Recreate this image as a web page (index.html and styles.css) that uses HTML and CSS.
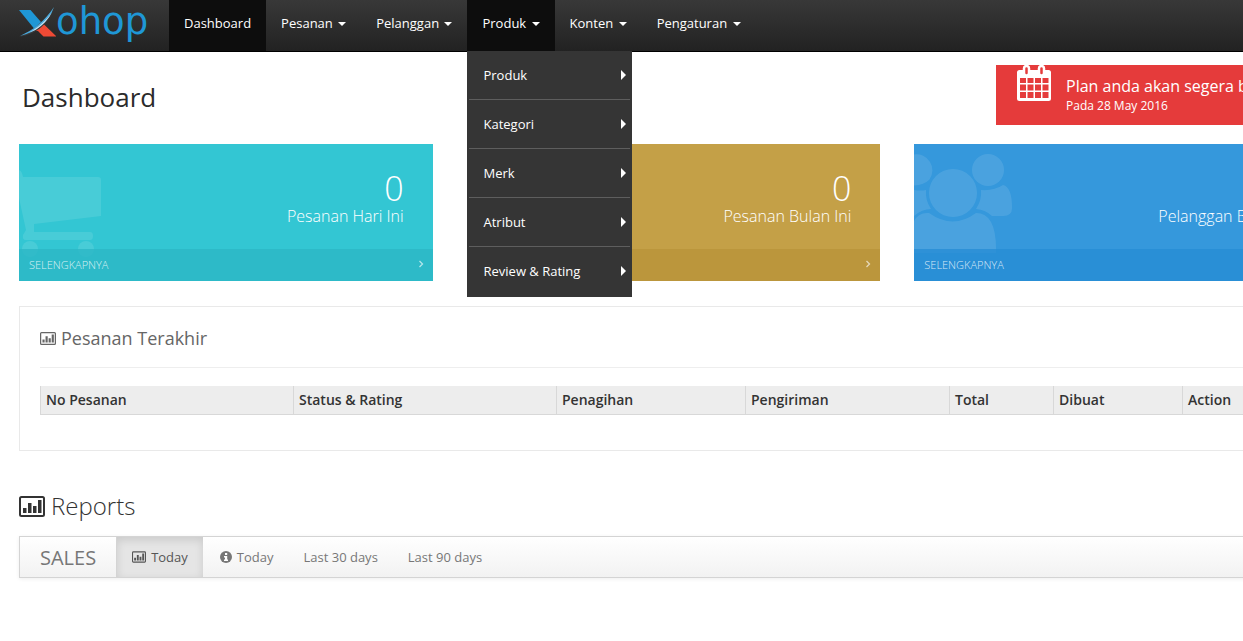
FILE: index.html
```html
<!DOCTYPE html>
<html lang="id">
<head>
<meta charset="utf-8">
<title>Xohop - Dashboard</title>
<link rel="stylesheet" href="styles.css">
</head>
<body>
<svg class="sprite" aria-hidden="true">
  <symbol id="chart" viewBox="0 0 26 21">
    <rect x="1" y="1" width="24" height="19" rx="1.5" fill="none" stroke="currentColor" stroke-width="2"/>
    <path fill="currentColor" d="M4 12h3.500v5H4zM9 7h3.500v10H9zM14 10h3.500v7H14zM19 4h3.500v13H19z"/>
  </symbol>
</svg>
<header class="navbar">
  <a class="brand" href="#" aria-label="Xohop">
    <svg class="brand-mark" viewBox="0 0 37 36" aria-hidden="true">
      <path fill="#1f97d6" d="M0 4h11.500l10.500 12-7 6.500z"/>
      <path fill="#ef4a35" d="M14 24l9-7.500 14.500 14H24.500L19 25z"/>
      <path fill="#3a3a3a" d="M0 31C14 25 27 15 35 0 31 17 18 28 0 31z"/>
      <path fill="#4aa9dc" d="M1 30C14 24 26 15 35 1 30 16 17 26.500 1 30z"/>
      <path fill="#cfe6f3" d="M10 26.500C19 22 28 14 33 6 28 16 19 24 10 26.500z"/>
    </svg>
    <span class="brand-text">ohop</span>
  </a>
  <nav>
    <ul class="menu">
      <li><a class="current" href="#">Dashboard</a></li>
      <li><a href="#">Pesanan <i class="caret"></i></a></li>
      <li><a href="#">Pelanggan <i class="caret"></i></a></li>
      <li class="open"><a class="current" href="#">Produk <i class="caret"></i></a>
        <ul class="dropdown">
          <li><a href="#">Produk<i class="arrow"></i></a></li>
          <li><a href="#">Kategori<i class="arrow"></i></a></li>
          <li><a href="#">Merk<i class="arrow"></i></a></li>
          <li><a href="#">Atribut<i class="arrow"></i></a></li>
          <li><a href="#">Review &amp; Rating<i class="arrow"></i></a></li>
        </ul>
      </li>
      <li><a href="#">Konten <i class="caret"></i></a></li>
      <li><a href="#">Pengaturan <i class="caret"></i></a></li>
    </ul>
  </nav>
</header>
<main class="page">
  <div class="page-head">
    <h1>Dashboard</h1>
    <div class="notice">
      <svg class="notice-icon" viewBox="0 0 34 36" aria-hidden="true">
        <path fill="#fff" fill-rule="evenodd" d="M2.500 5H31.500Q34 5 34 7.500V33.500Q34 36 31.500 36H2.500Q0 36 0 33.500V7.500Q0 5 2.500 5zM3 13v5h6v-5zM10.500 13v5h6v-5zM18 13v5h6v-5zM25.500 13v5h6v-5zM3 19.500v6h6v-6zM10.500 19.500v6h6v-6zM18 19.500v6h6v-6zM25.500 19.500v6h6v-6zM3 27v6h6v-6zM10.500 27v6h6v-6zM18 27v6h6v-6zM25.500 27v6h6v-6z"/>
        <path fill="#e53b3b" stroke="#fff" stroke-width="2.500" d="M7 3.500a2.500 2.500 0 0 1 5 0V8a2.500 2.500 0 0 1-5 0zM22 3.500a2.500 2.500 0 0 1 5 0V8a2.500 2.500 0 0 1-5 0z"/>
      </svg>
      <div class="notice-text">
        <strong>Plan anda akan segera berakhir</strong>
        <span>Pada 28 May 2016</span>
      </div>
    </div>
  </div>

  <section class="cards">
    <article class="card teal">
      <svg class="card-icon" viewBox="0 0 110 137" aria-hidden="true">
        <path d="M0 26Q3 27 4 33H79Q82 33 82 36V72L15 80V88H71Q74 88 74 92T71 96H7Q3 96 4 91L7 86 0 54z"/>
        <circle cx="11" cy="105" r="8"/><circle cx="67" cy="105" r="8"/>
      </svg>
      <div class="card-body"><span class="number">0</span><span class="label">Pesanan Hari Ini</span></div>
      <a class="more" href="#">SELENGKAPNYA<svg viewBox="0 0 6 8" aria-hidden="true"><path d="M1.500 1l3 3-3 3"/></svg></a>
    </article>
    <article class="card gold">
      <div class="card-body"><span class="number">0</span><span class="label">Pesanan Bulan Ini</span></div>
      <a class="more" href="#" aria-label="Selengkapnya"><svg viewBox="0 0 6 8" aria-hidden="true"><path d="M1.500 1l3 3-3 3"/></svg></a>
    </article>
    <article class="card blue">
      <svg class="card-icon" viewBox="0 0 110 137" aria-hidden="true">
        <circle cx="39" cy="49" r="24"/><circle cx="74" cy="26" r="16"/>
        <path d="M0 10.500A16 16 0 0 1 15.500 35.500Q10 41 0 41.500z"/>
        <path d="M0 46Q7 47 12 46Q11 56 17 65Q8 65 0 72z"/>
        <path d="M67 46Q80 47 89 41Q98 43 98 64Q98 72 89 72H78Q72 66 62 65Q68 56 67 46z"/>
        <path d="M0 77Q5 68 15 69Q39 86 62 69Q82 69 82 105V109H0z"/>
      </svg>
      <div class="card-body"><span class="number">0</span><span class="label">Pelanggan Bulan Ini</span></div>
      <a class="more" href="#">SELENGKAPNYA<svg viewBox="0 0 6 8" aria-hidden="true"><path d="M1.500 1l3 3-3 3"/></svg></a>
    </article>
  </section>

  <section class="panel">
    <h2><svg class="icon-md" aria-hidden="true"><use href="#chart"/></svg>Pesanan Terakhir</h2>
    <table>
      <colgroup><col class="c-no"><col class="c-status"><col class="c-bill"><col class="c-ship"><col class="c-total"><col class="c-date"><col></colgroup>
      <thead>
        <tr><th>No Pesanan</th><th>Status &amp; Rating</th><th>Penagihan</th><th>Pengiriman</th><th>Total</th><th>Dibuat</th><th>Action</th></tr>
      </thead>
    </table>
  </section>

  <section class="reports">
    <h2><svg class="icon-lg" aria-hidden="true"><use href="#chart"/></svg>Reports</h2>
    <div class="tabs">
      <h3>SALES</h3>
      <button class="tab selected" type="button"><svg class="icon-sm" aria-hidden="true"><use href="#chart"/></svg>Today</button>
      <button class="tab" type="button"><svg class="icon-info" viewBox="0 0 12 12" aria-hidden="true"><circle cx="6" cy="6" r="6" fill="currentColor"/><path fill="#fff" d="M5 2h2.200v2H5zM4 5h3.200v3.500H8V10H4V8.500h1v-2H4z"/></svg>Today</button>
      <button class="tab" type="button">Last 30 days</button>
      <button class="tab" type="button">Last 90 days</button>
    </div>
  </section>
</main>
</body>
</html>
```
FILE: styles.css
```css
* { box-sizing: border-box; }
body {
  margin: 0;
  overflow-x: hidden;
  background: #fff;
  color: #333;
  font: 13px/20px "Open Sans", "Noto Sans", sans-serif;
}
h1, h2, h3, ul { margin: 0; padding: 0; font-weight: 400; }
ul { list-style: none; }
a { color: inherit; text-decoration: none; }
.sprite { position: absolute; width: 0; height: 0; }

.navbar {
  display: flex;
  min-width: 1347px;
  height: 52px;
  border-bottom: 1px solid #000;
  background: linear-gradient(#383838, #222);
  color: #fff;
}
.brand { display: flex; width: 169px; padding: 6px 0 0 19px; }
.brand-mark { flex: none; width: 37px; height: 36px; }
.brand-text { color: #1f97d6; font: 37px/32px "DejaVu Sans", sans-serif; }
.menu { display: flex; }
.menu > li { position: relative; }
.menu > li > a { display: block; height: 51px; padding: 13px 15px; }
.menu .current { background: #0d0d0d; }
.caret {
  display: inline-block;
  margin: 0 0 2px 2px;
  border: 4px solid transparent;
  border-top-color: #fff;
  border-bottom: 0;
  vertical-align: middle;
}
.dropdown {
  position: absolute;
  z-index: 2;
  top: 51px;
  left: 0;
  width: 165px;
  padding: 0 2px 2px;
  background: #353535;
}
.dropdown li + li { border-top: 1px solid #5e5e5e; }
.dropdown a {
  display: flex;
  align-items: center;
  justify-content: space-between;
  height: 48px;
  padding: 0 4px 0 14px;
}
.arrow { border: 5px solid transparent; border-left-color: #fff; border-right: 0; }

.page { min-width: 1347px; padding: 13px 19px 40px; }
.page-head { display: flex; justify-content: space-between; align-items: flex-start; }
.page-head h1 { padding-left: 3px; color: #2b2b2b; font-size: 26px; line-height: 64px; }
.notice {
  display: flex;
  gap: 15px;
  width: 332px;
  height: 60px;
  padding: 0 21px;
  background: #e53b3b;
  color: #fff;
}
.notice-icon { flex: none; width: 34px; height: 36px; }
.notice-text { display: flex; flex-direction: column; padding-top: 10px; white-space: nowrap; }
.notice-text strong { font-size: 16px; font-weight: 400; line-height: 22px; }
.notice-text span { font-size: 12px; line-height: 18px; }

.cards { display: grid; grid-template-columns: repeat(3, 1fr); gap: 34px; margin-top: 15px; }
.card { position: relative; overflow: hidden; color: #fff; font-weight: 300; }
.teal { background: #33c6d3; }
.gold { background: #c4a047; }
.blue { background: #3598dc; }
.card-icon { position: absolute; top: 0; left: 0; width: 110px; height: 137px; fill: #fff; opacity: 0.1; }
.card-body {
  display: flex;
  flex-direction: column;
  align-items: flex-end;
  height: 105px;
  padding: 27px 29px 0;
}
.number { font-size: 34px; line-height: 35px; }
.label { font-size: 16px; line-height: 20px; }
.more {
  position: relative;
  display: flex;
  align-items: center;
  justify-content: space-between;
  height: 32px;
  padding: 0 9px 0 10px;
  color: rgba(255, 255, 255, 0.8);
  font-size: 11px;
}
.teal .more { background: rgba(44, 183, 198, 0.8); }
.gold .more { justify-content: flex-end; background: rgba(185, 148, 58, 0.8); }
.blue .more { background: rgba(39, 141, 213, 0.8); }
.more svg { width: 6px; height: 8px; margin-bottom: 2px; fill: none; stroke: currentColor; stroke-width: 1.3; opacity: 0.8; }

.panel { margin-top: 25px; padding: 19px 20px 35px; border: 1px solid #e9e9e9; }
.panel h2 {
  display: flex;
  align-items: center;
  gap: 5px;
  padding-bottom: 17px;
  border-bottom: 1px solid #eee;
  color: #666;
  font-size: 18px;
  line-height: 24px;
}
.icon-md { width: 16px; height: 13px; }
.icon-lg { width: 26px; height: 21px; }
.icon-sm { width: 14px; height: 12px; }
.icon-info { width: 12px; height: 12px; }
table { width: 100%; margin-top: 18px; border-collapse: separate; border-spacing: 0; table-layout: fixed; }
th {
  height: 29px;
  padding: 0 5px;
  border-left: 1px solid #d8d8d8;
  border-bottom: 1px solid #d8d8d8;
  background: #ededed;
  font-size: 14px;
  font-weight: 600;
  line-height: 20px;
  text-align: left;
}
.c-no { width: 253px; }
.c-status { width: 263px; }
.c-bill { width: 189px; }
.c-ship { width: 204px; }
.c-total { width: 104px; }
.c-date { width: 129px; }

.reports { margin-top: 38px; }
.reports h2 { display: flex; align-items: center; gap: 6px; font-size: 24px; font-weight: 300; line-height: 34px; }
.tabs {
  display: flex;
  height: 42px;
  margin-top: 13px;
  border: 1px solid #d4d4d4;
  background: linear-gradient(#fff, #f2f2f2);
  box-shadow: 0 1px 4px rgba(0, 0, 0, 0.07);
  color: #777;
}
.tabs h3 { padding: 0 20px; border-right: 1px solid #d4d4d4; font-size: 20px; line-height: 41px; }
.tab {
  display: flex;
  align-items: center;
  gap: 5px;
  padding: 0 15px;
  border: 0;
  background: none;
  color: #777;
  font: inherit;
}
.selected { margin-right: 2px; background: #e5e5e5; box-shadow: inset 0 3px 8px rgba(0, 0, 0, 0.12); color: #555; }
```
